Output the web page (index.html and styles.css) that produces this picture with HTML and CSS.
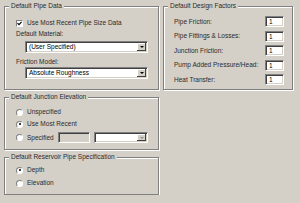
FILE: index.html
```html
<!DOCTYPE html>
<html lang="en">
<head>
  <meta charset="UTF-8">
  <title>Defaults</title>
  <link rel="stylesheet" href="styles.css">
</head>
<body>

<div class="dialog">
  <div class="col-left">
    <!-- 管道默认值 -->
    <fieldset class="group group-pipe">
      <legend>Default Pipe Data</legend>
      <div class="check-row">
        <span class="check"><svg width="5" height="5" viewBox="0 0 5 5"><path d="M0.5 2.2 L2 3.7 L4.6 0.9" fill="none" stroke="#000" stroke-width="1.2"/></svg></span>
        <span>Use Most Recent Pipe Size Data</span>
      </div>
      <div class="field-label">Default Material:</div>
      <div class="combo combo-wide">
        <span class="combo-text">(User Specified)</span>
        <span class="combo-btn"><i class="arrow"></i></span>
      </div>
      <div class="field-label label-friction">Friction Model:</div>
      <div class="combo combo-wide combo-second">
        <span class="combo-text">Absolute Roughness</span>
        <span class="combo-btn"><i class="arrow"></i></span>
      </div>
    </fieldset>

    <fieldset class="group group-junction">
      <legend>Default Junction Elevation</legend>
      <div class="option first">
        <span class="radio"></span><span>Unspecified</span>
      </div>
      <div class="option">
        <span class="radio on"></span><span>Use Most Recent</span>
      </div>
      <div class="option option-spec">
        <span class="radio"></span><span class="spec-text">Specified</span>
        <span class="text-box disabled"></span>
        <div class="combo combo-small">
          <span class="combo-text"></span>
          <span class="combo-btn"><i class="arrow off"></i></span>
        </div>
      </div>
    </fieldset>

    <fieldset class="group group-reservoir">
      <legend>Default Reservoir Pipe Specification</legend>
      <div class="option first">
        <span class="radio on"></span><span>Depth</span>
      </div>
      <div class="option">
        <span class="radio"></span><span>Elevation</span>
      </div>
    </fieldset>
  </div>

  <div class="col-right">
    <fieldset class="group group-factors">
      <legend>Default Design Factors</legend>
      <div class="factor-row first">
        <span>Pipe Friction:</span><span class="text-box num">1</span>
      </div>
      <div class="factor-row">
        <span>Pipe Fittings &amp; Losses:</span><span class="text-box num">1</span>
      </div>
      <div class="factor-row">
        <span>Junction Friction:</span><span class="text-box num">1</span>
      </div>
      <div class="factor-row">
        <span>Pump Added Pressure/Head:</span><span class="text-box num">1</span>
      </div>
      <div class="factor-row">
        <span>Heat Transfer:</span><span class="text-box num">1</span>
      </div>
    </fieldset>
  </div>
</div>

</body>
</html>
```

FILE: styles.css
```css
* {
  margin: 0;
  padding: 0;
  box-sizing: border-box;
}

body {
  background: #d4d0c8;
  font-family: "Liberation Sans", Arial, sans-serif;
  font-size: 6.5px;
  line-height: 8px;
  color: #2a2a2a;
}

.dialog {
  display: flex;
  gap: 4px;
  padding: 2px 0 0 4px;
}

.col-left {
  width: 155px;
}

.col-right {
  width: 130px;
}

/* 分组框 */
.group {
  border: 1px solid #808080;
  box-shadow: 1px 1px 0 #fff, inset 1px 1px 0 #fff;
  min-width: 0;
  padding: 0 10px 0 11px;
}

.group legend {
  margin-left: -7px;
  padding: 0 2px;
  background: #d4d0c8;
  line-height: 8px;
}

.group-pipe {
  padding-bottom: 10px;
}

.group-junction {
  margin-top: 3px;
  padding-bottom: 6px;
}

.group-reservoir {
  margin-top: 3px;
  padding-bottom: 7px;
}

.group-factors {
  padding: 0 8px 4px 10px;
}

.group-factors legend {
  margin-left: -6px;
}

/* 复选框 */
.check-row {
  display: flex;
  align-items: center;
  height: 8px;
  margin-top: 9px;
}

.check {
  width: 7px;
  height: 7px;
  margin-right: 4px;
  background: #fff;
  border: 1px solid;
  border-color: #808080 #fff #fff #808080;
  display: flex;
  align-items: center;
  justify-content: center;
}

.field-label {
  margin-top: 3px;
  height: 8px;
}

.label-friction {
  margin-top: 5px;
}

/* 下拉框 */
.combo {
  display: flex;
  height: 12px;
  border: 1px solid;
  border-color: #808080 #fff #fff #808080;
  box-shadow: inset 1px 1px 0 #404040, inset -1px -1px 0 #d4d0c8;
  background: #fff;
  padding: 1px;
}

.combo-wide {
  margin: 3px 0 0 9px;
}

.combo-second {
  margin-top: 1px;
}

.combo-text {
  flex: 1;
  padding-left: 2px;
  line-height: 8px;
  color: #000;
}

.combo-btn {
  width: 9px;
  height: 8px;
  background: #d4d0c8;
  box-shadow: inset -1px -1px 0 #404040, inset 1px 1px 0 #fff;
  display: flex;
  align-items: center;
  justify-content: center;
}

.arrow {
  width: 0;
  height: 0;
  border-left: 2px solid transparent;
  border-right: 2px solid transparent;
  border-top: 2px solid #000;
}

.arrow.off {
  border-top-color: #909090;
}

/* 单选按钮 */
.option {
  display: flex;
  align-items: center;
  height: 8px;
  margin-top: 4px;
}

.option.first {
  margin-top: 7px;
}

.group-reservoir .option {
  margin-top: 5px;
}

.radio {
  width: 7px;
  height: 7px;
  margin-right: 4px;
  border-radius: 50%;
  background: #fff;
  border: 1px solid;
  border-color: #808080 #fff #fff #808080;
  display: flex;
  align-items: center;
  justify-content: center;
}

.radio.on::after {
  content: "";
  width: 2px;
  height: 2px;
  border-radius: 50%;
  background: #000;
}

.option-spec {
  height: 11px;
}

.spec-text {
  width: 31px;
}

.text-box {
  display: block;
  height: 11px;
  background: #fff;
  border: 1px solid;
  border-color: #808080 #fff #fff #808080;
  box-shadow: inset 1px 1px 0 #404040, inset -1px -1px 0 #d4d0c8;
}

.text-box.disabled {
  width: 32px;
  background: #d4d0c8;
}

.combo-small {
  width: 54px;
  height: 11px;
  margin-left: 4px;
}

.combo-small .combo-btn {
  height: 7px;
}

/* 设计系数 */
.factor-row {
  display: flex;
  justify-content: space-between;
  align-items: center;
  height: 11px;
  margin-top: 3.5px;
}

.factor-row.first {
  margin-top: 6px;
}

.num {
  width: 19px;
  padding-left: 3px;
  line-height: 9px;
  color: #000;
}
```
